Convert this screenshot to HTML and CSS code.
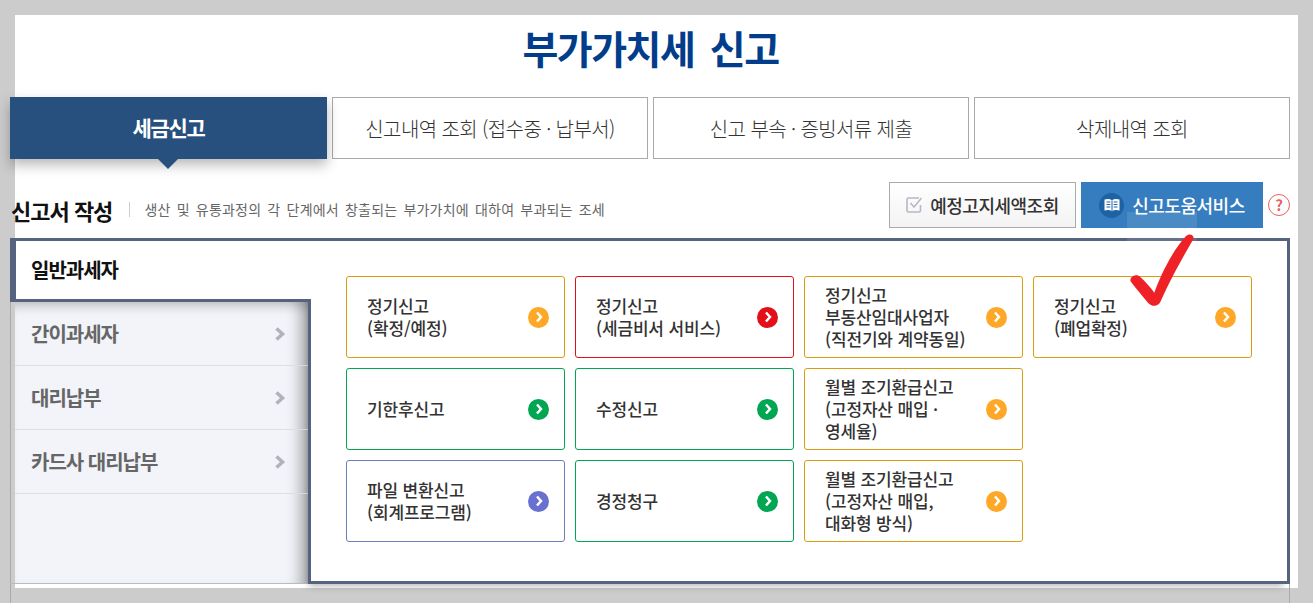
FILE: index.html
```html
<!DOCTYPE html>
<html lang="ko">
<head>
<meta charset="utf-8">
<title>부가가치세 신고</title>
<link rel="stylesheet" href="styles.css">
</head>
<body>
<div class="page">
  <div class="inner">
    <h1 class="title">부가가치세 신고</h1>
    <div class="tabs">
      <div class="tab tab-on">세금신고</div>
      <div class="tab">신고내역 조회 (접수중 · 납부서)</div>
      <div class="tab">신고 부속 · 증빙서류 제출</div>
      <div class="tab">삭제내역 조회</div>
    </div>
    <div class="head">
      <h2 class="head-title">신고서 작성</h2>
      <p class="head-desc">생산 및 유통과정의 각 단계에서 창출되는 부가가치에 대하여 부과되는 조세</p>
      <a class="btn btn-plain">
        <svg class="btn-check" width="17" height="16" viewBox="0 0 17 16"><path d="M14.500 8V13.500Q14.500 15 13 15H2.500Q1 15 1 13.500V2.500Q1 1 2.500 1H13" fill="none" stroke="#b6bac6" stroke-width="1.600"/><path d="M4.500 6L8 10L15.500 1" fill="none" stroke="#b6bac6" stroke-width="1.600"/></svg>
        예정고지세액조회
      </a>
      <a class="btn btn-blue">
        <span class="btn-book"><svg width="16" height="14" viewBox="0 0 16 14"><path d="M0.500 1.500C3.500 0.500 6 0.800 8 2.200C10 0.800 12.500 0.500 15.500 1.500V12.500C12.500 11.500 10 11.800 8 13.200C6 11.800 3.500 11.500 0.500 12.500Z" fill="#fff"/><path d="M8 2.500V13M2.500 4H6.300M2.500 6.500H6.300M2.500 9H6.300M9.700 4H13.500M9.700 6.500H13.500M9.700 9H13.500" stroke="#1d62a4" stroke-width="1" fill="none"/></svg></span>
        신고도움서비스
      </a>
      <span class="help">?</span>
    </div>
    <div class="panel-wrap">
      <div class="panel">
        <div class="side">
          <div class="side-on">일반과세자</div>
          <ul class="side-list">
            <li class="side-item">간이과세자<svg class="side-arrow" width="12" height="14" viewBox="0 0 12 14"><path d="M2.500 1.500L8.500 7L2.500 12.500" fill="none" stroke="#b1b4bf" stroke-width="3.600"/></svg></li>
            <li class="side-item">대리납부<svg class="side-arrow" width="12" height="14" viewBox="0 0 12 14"><path d="M2.500 1.500L8.500 7L2.500 12.500" fill="none" stroke="#b1b4bf" stroke-width="3.600"/></svg></li>
            <li class="side-item">카드사 대리납부<svg class="side-arrow" width="12" height="14" viewBox="0 0 12 14"><path d="M2.500 1.500L8.500 7L2.500 12.500" fill="none" stroke="#b1b4bf" stroke-width="3.600"/></svg></li>
          </ul>
        </div>
        <div class="content">
          <div class="cards">
            <a class="card c-amber"><span>정기신고<br>(확정/예정)</span><i class="go"><svg width="8" height="12" viewBox="0 0 8 12"><path d="M2 1.500L6 6L2 10.500" fill="none" stroke="#fff" stroke-width="2.500"/></svg></i></a>
            <a class="card c-red"><span>정기신고<br>(세금비서 서비스)</span><i class="go"><svg width="8" height="12" viewBox="0 0 8 12"><path d="M2 1.500L6 6L2 10.500" fill="none" stroke="#fff" stroke-width="2.500"/></svg></i></a>
            <a class="card c-amber"><span>정기신고<br>부동산임대사업자<br>(직전기와 계약동일)</span><i class="go"><svg width="8" height="12" viewBox="0 0 8 12"><path d="M2 1.500L6 6L2 10.500" fill="none" stroke="#fff" stroke-width="2.500"/></svg></i></a>
            <a class="card c-amber"><span>정기신고<br>(폐업확정)</span><i class="go"><svg width="8" height="12" viewBox="0 0 8 12"><path d="M2 1.500L6 6L2 10.500" fill="none" stroke="#fff" stroke-width="2.500"/></svg></i></a>
            <a class="card c-green"><span>기한후신고</span><i class="go"><svg width="8" height="12" viewBox="0 0 8 12"><path d="M2 1.500L6 6L2 10.500" fill="none" stroke="#fff" stroke-width="2.500"/></svg></i></a>
            <a class="card c-green"><span>수정신고</span><i class="go"><svg width="8" height="12" viewBox="0 0 8 12"><path d="M2 1.500L6 6L2 10.500" fill="none" stroke="#fff" stroke-width="2.500"/></svg></i></a>
            <a class="card c-amber"><span>월별 조기환급신고<br>(고정자산 매입 ·<br>영세율)</span><i class="go"><svg width="8" height="12" viewBox="0 0 8 12"><path d="M2 1.500L6 6L2 10.500" fill="none" stroke="#fff" stroke-width="2.500"/></svg></i></a>
            <div class="card-gap"></div>
            <a class="card c-blue"><span>파일 변환신고<br>(회계프로그램)</span><i class="go"><svg width="8" height="12" viewBox="0 0 8 12"><path d="M2 1.500L6 6L2 10.500" fill="none" stroke="#fff" stroke-width="2.500"/></svg></i></a>
            <a class="card c-green"><span>경정청구</span><i class="go"><svg width="8" height="12" viewBox="0 0 8 12"><path d="M2 1.500L6 6L2 10.500" fill="none" stroke="#fff" stroke-width="2.500"/></svg></i></a>
            <a class="card c-amber"><span>월별 조기환급신고<br>(고정자산 매입,<br>대화형 방식)</span><i class="go"><svg width="8" height="12" viewBox="0 0 8 12"><path d="M2 1.500L6 6L2 10.500" fill="none" stroke="#fff" stroke-width="2.500"/></svg></i></a>
          </div>
        </div>
      </div>
    </div>
  </div>
</div>
<div class="mark-tint"></div>
<svg class="mark" width="70" height="80" viewBox="201 186 210 240"><path d="M212 326C216 316 230 312 240 320C255 333 270 350 283 368C300 320 335 245 378 198C386 190 402 192 401 206C375 250 335 320 302 394C296 410 275 412 264 398C245 375 228 355 215 338C211 333 210 330 212 326Z" fill="#ee2226"/></svg>
</body>
</html>
```
FILE: styles.css
```css
* { box-sizing: border-box; }
html, body { height: 100%; }
body {
  margin: 0;
  background: #ccc;
  overflow: hidden;
  position: relative;
  font-family: "Noto Sans CJK KR", "Noto Sans", sans-serif;
  color: #333;
}
.page { margin: 15px 15px 0; height: 573px; background: #fff; }
.inner { width: 1280px; margin-left: -5px; }
.title {
  margin: 0;
  height: 82px;
  padding: 4px 0 0 1px;
  text-align: center;
  font-size: 39px;
  line-height: 56px;
  font-weight: 700;
  letter-spacing: -1.500px;
  word-spacing: 6px;
  color: #023d8b;
}
.tabs { display: flex; gap: 5px; }
.tab {
  flex: 1;
  height: 62px;
  border: 1px solid #aaa;
  background: #fff;
  display: flex;
  align-items: center;
  justify-content: center;
  font-size: 20px;
  font-weight: 300;
  letter-spacing: -.6px;
  color: #333;
}
.tab-on {
  position: relative;
  flex: none;
  width: 317px;
  padding-bottom: 3px;
  border: 0;
  background: #27507f;
  color: #fff;
  font-size: 21px;
  font-weight: 700;
  letter-spacing: -1.300px;
  box-shadow: 0 6px 12px rgba(0, 0, 0, .28);
}
.tab-on::after {
  content: "";
  position: absolute;
  left: 148px;
  top: 100%;
  border: 10px solid transparent;
  border-bottom: 0;
  border-top-color: #27507f;
}
.head { display: flex; align-items: center; margin-top: 23px; height: 46px; }
.head-title {
  margin: 0 0 0 1px;
  font-size: 22px;
  font-weight: 700;
  letter-spacing: -1px;
  color: #111;
  white-space: nowrap;
  padding-top: 9px;
}
.head-desc {
  margin: 9px 0 0 17px;
  padding-left: 14px;
  border-left: 1px solid #ccc;
  font-size: 14px;
  line-height: 15px;
  letter-spacing: .2px;
  word-spacing: 2px;
  color: #666;
  flex: 1;
  white-space: nowrap;
}
.btn {
  height: 46px;
  display: flex;
  align-items: center;
  justify-content: center;
  font-size: 18px;
  font-weight: 500;
  letter-spacing: -.5px;
}
.btn-plain {
  width: 187px;
  gap: 7px;
  border: 1px solid #aaa;
  background: linear-gradient(#fff, #f3f3f3);
  color: #333;
}
.btn-blue { width: 182px; margin-left: 5px; gap: 8px; background: #367dbf; color: #fff; }
.btn-book {
  width: 25px;
  height: 25px;
  border-radius: 50%;
  background: #1d62a4;
  display: flex;
  align-items: center;
  justify-content: center;
}
.help {
  width: 22px;
  height: 22px;
  margin-left: 5px;
  border: 1.500px solid #e95f62;
  border-radius: 50%;
  color: #e95f62;
  font-size: 15px;
  font-weight: 700;
  line-height: 19px;
  text-align: center;
}
.panel-wrap {
  margin-top: 10px;
  height: 365px;
  border-left: 1px solid #aaa;
  border-right: 1px solid #aaa;
}
.panel { display: flex; height: 346px; margin: 0 -1px; }
.side {
  width: 298px;
  flex: none;
  display: flex;
  flex-direction: column;
  border-bottom: 1px solid #bbb;
}
.side-on {
  position: relative;
  z-index: 2;
  width: 301px;
  height: 64px;
  flex: none;
  padding-left: 15px;
  border-top: 3px solid #556380;
  border-bottom: 3px solid #556380;
  border-left: 6px solid #556380;
  background: #fff;
  font-size: 20px;
  font-weight: 700;
  letter-spacing: -1px;
  line-height: 57px;
  color: #111;
}
.side-list {
  flex: 1;
  list-style: none;
  margin: 0 0 0 5px;
  padding: 0;
  background: #f2f4f9;
  box-shadow: inset 0 12px 12px -8px rgba(0, 0, 0, .22), inset -18px 0 14px -10px rgba(0, 0, 0, .3);
}
.side-item {
  height: 64px;
  display: flex;
  align-items: center;
  justify-content: space-between;
  padding: 0 22px 0 16px;
  border-bottom: 1px solid #dcdee3;
  font-size: 20px;
  font-weight: 700;
  letter-spacing: -1px;
  color: #666;
}
.content {
  flex: 1;
  height: 346px;
  position: relative;
  padding: 35px 0 0 35px;
  border: 3px solid #556380;
  background: #fff;
  box-shadow: -3px 6px 7px -4px rgba(0, 0, 0, .3);
}
.cards { display: grid; grid-template-columns: repeat(4, 219px); grid-auto-rows: 82px; gap: 10px; }
.card-gap { visibility: hidden; }
.card {
  display: flex;
  align-items: center;
  justify-content: space-between;
  padding: 0 15px 0 20px;
  border: 1px solid;
  border-radius: 3px;
  font-size: 17px;
  line-height: 22px;
  letter-spacing: -.15px;
  font-weight: 500;
  color: #333;
}
.card span { padding-bottom: 1px; }
.go {
  flex: none;
  width: 21px;
  height: 21px;
  border-radius: 50%;
  display: flex;
  align-items: center;
  justify-content: center;
}
.c-amber { border-color: #d99e10; }
.c-amber .go { background: #ffa726; }
.c-red { border-color: #e0111b; }
.c-red .go { background: #e30e18; }
.c-green { border-color: #00a651; }
.c-green .go { background: #00a651; }
.c-blue { border-color: #6d7fb8; }
.c-blue .go { background: #6a70d0; }
.mark-tint {
  position: absolute;
  left: 1127px;
  top: 212px;
  width: 70px;
  height: 30px;
  background: rgba(255, 255, 255, .1);
}
.mark { position: absolute; left: 1127px; top: 232px; }
```
